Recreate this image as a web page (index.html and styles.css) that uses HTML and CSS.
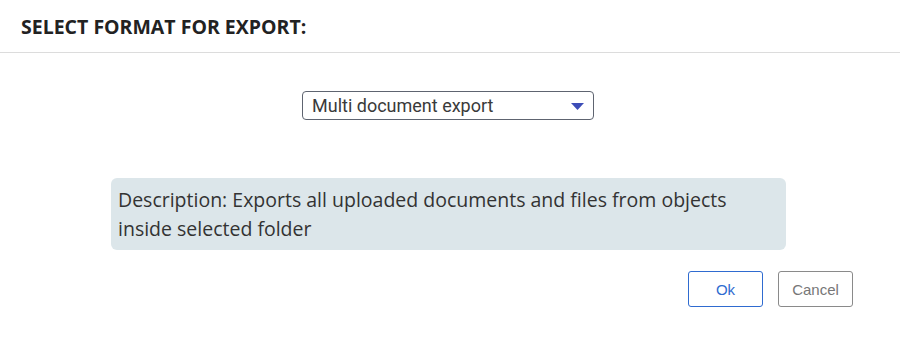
FILE: index.html
```html
<!DOCTYPE html>
<html>
<head>
<meta charset="utf-8">
<link rel="stylesheet" href="styles.css">
</head>
<body>
<div class="dialog">
  <div class="header">
    <h1 class="title">SELECT FORMAT FOR EXPORT:</h1>
  </div>
  <div class="body">
    <div class="select-row">
      <div class="select">
        <span class="select-text">Multi document export</span>
        <svg class="caret" width="13" height="7" viewBox="0 0 13 7"><path d="M0 0H13L6.5 7Z" fill="#3d4db7"/></svg>
      </div>
    </div>
    <div class="desc">Description: Exports all uploaded documents and files from objects inside selected folder</div>
    <div class="actions">
      <button class="btn btn-ok">Ok</button>
      <button class="btn btn-cancel">Cancel</button>
    </div>
  </div>
</div>
</body>
</html>
```
FILE: styles.css
```css
* { box-sizing: border-box; }
html, body { margin: 0; padding: 0; background: #fff; }
.dialog { width: 900px; height: 351px; }
.header {
  height: 53px;
  border-bottom: 1px solid #dcdcdc;
  padding: 14px 21px 0;
}
.title {
  margin: 0;
  font-family: "Open Sans", sans-serif;
  font-weight: 700;
  font-size: 19.5px;
  line-height: 26px;
  color: #222;
}
.body { padding: 38px 0 0; }
.select-row { display: flex; justify-content: center; padding-right: 4px; }
.select {
  width: 292px;
  height: 29px;
  border: 1px solid #5e6470;
  border-radius: 4px;
  display: flex;
  align-items: center;
  justify-content: space-between;
  padding: 0 9px 0 9px;
}
.select-text {
  font-family: Roboto, sans-serif;
  font-size: 18px;
  color: #3a3a3a;
}
.caret { display: block; margin-top: 1px; }
.desc {
  margin: 58px 0 0 111px;
  width: 675px;
  height: 72px;
  background: #dce6ea;
  border-radius: 6px;
  padding: 7px 40px 0 7px;
  font-family: "Open Sans", sans-serif;
  font-size: 19.5px;
  line-height: 29px;
  color: #333;
}
.actions {
  display: flex;
  justify-content: flex-end;
  gap: 15px;
  margin-top: 21px;
  padding-right: 47px;
}
.btn {
  width: 75px;
  height: 36px;
  background: #fff;
  border-radius: 3px;
  font-family: "Liberation Sans", Arial, sans-serif;
  font-size: 15px;
  padding: 0;
}
.btn-ok { border: 1px solid #2f6bd0; color: #2f6bd0; }
.btn-cancel { border: 1px solid #8a8a8a; color: #777; }
```
